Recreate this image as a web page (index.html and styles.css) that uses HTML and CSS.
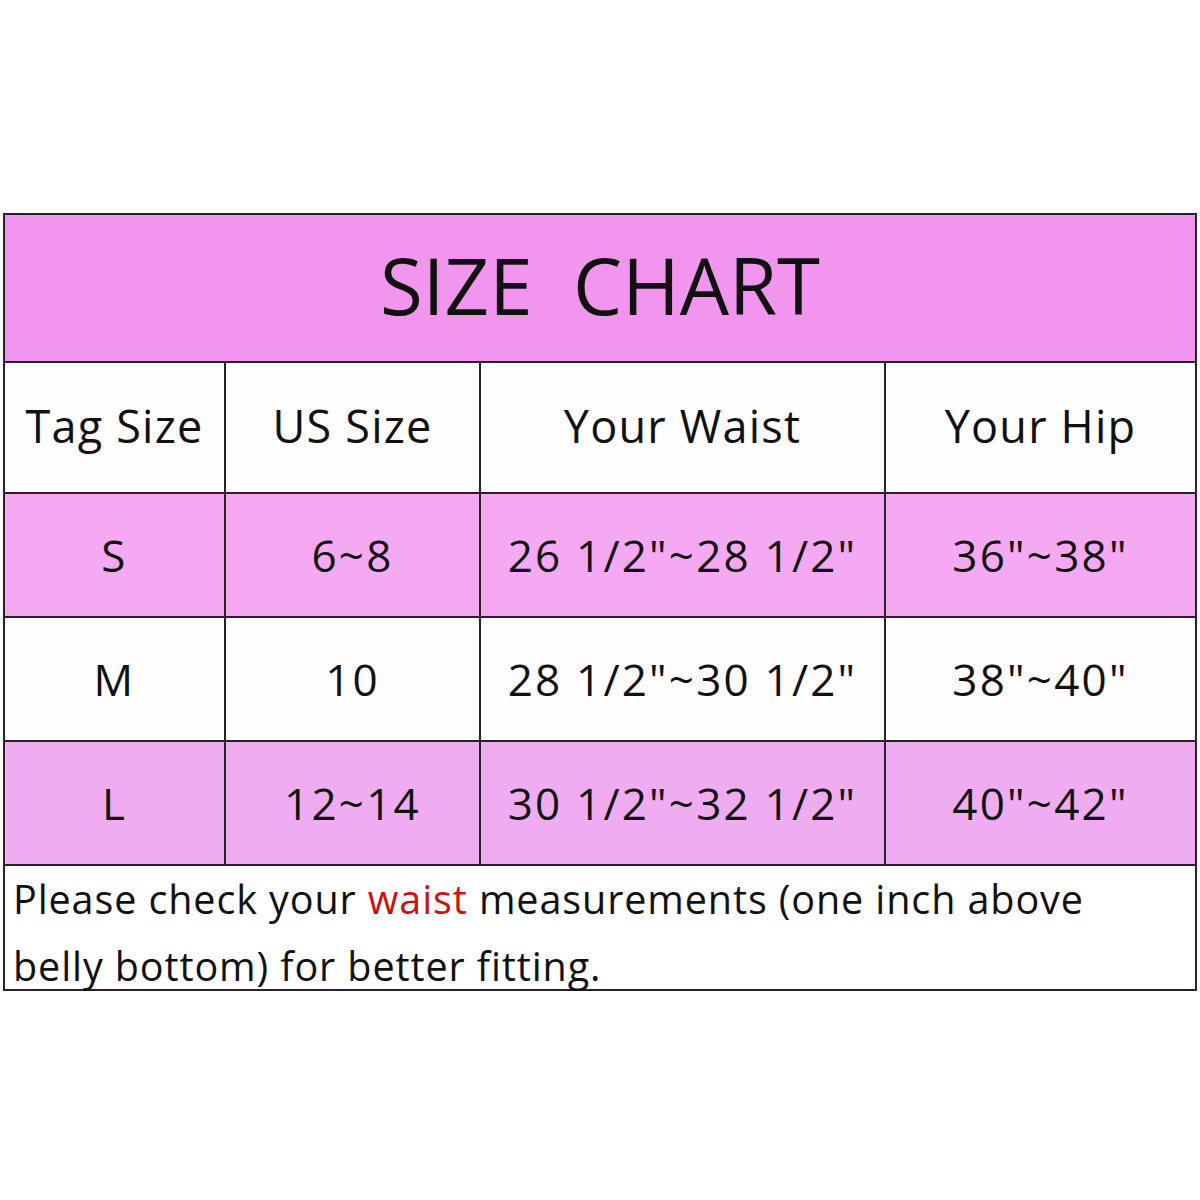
FILE: index.html
```html
<!DOCTYPE html>
<html>
<head>
<meta charset="utf-8">
<link rel="stylesheet" href="styles.css">
</head>
<body>
<div class="chart">
  <div class="title">SIZE&nbsp;&nbsp;CHART</div>
  <div class="grid">
    <div class="cell head">Tag Size</div>
    <div class="cell head">US Size</div>
    <div class="cell head">Your Waist</div>
    <div class="cell head">Your Hip</div>

    <div class="cell pink">S</div>
    <div class="cell pink">6~8</div>
    <div class="cell pink">26 1/2"~28 1/2"</div>
    <div class="cell pink">36"~38"</div>

    <div class="cell">M</div>
    <div class="cell">10</div>
    <div class="cell">28 1/2"~30 1/2"</div>
    <div class="cell">38"~40"</div>

    <div class="cell pink2">L</div>
    <div class="cell pink2">12~14</div>
    <div class="cell pink2">30 1/2"~32 1/2"</div>
    <div class="cell pink2">40"~42"</div>
  </div>
  <div class="note">Please check your <span class="red">waist</span> measurements (one inch above belly bottom) for better fitting.</div>
</div>
</body>
</html>
```
FILE: styles.css
```css
html, body {
  margin: 0;
  padding: 0;
  background: #ffffff;
}
body {
  width: 1200px;
  height: 1200px;
  font-family: "Open Sans", "Noto Sans", sans-serif;
  color: #111;
}
.chart {
  margin: 213px 0 0 3px;
  width: 1194px;
  border: 2px solid #2b1f2b;
  box-sizing: border-box;
}
.title {
  height: 148px;
  background: #f295ee;
  border-bottom: 2px solid #2b1f2b;
  box-sizing: border-box;
  display: flex;
  align-items: center;
  justify-content: center;
  font-size: 78px;
  padding-bottom: 6px;
}
.grid {
  display: grid;
  grid-template-columns: 221px 255px 405px 1fr;
  grid-template-rows: 131px 124px 124px 124px;
}
.cell {
  display: flex;
  align-items: center;
  justify-content: center;
  font-size: 44px;
  letter-spacing: 2.2px;
  border-right: 2px solid #2b1f2b;
  border-bottom: 2px solid #2b1f2b;
  box-sizing: border-box;
  background: #fffdfe;
}
.cell:nth-child(4n) {
  border-right: none;
}
.head {
  font-size: 45px;
  letter-spacing: 1.2px;
  padding-bottom: 4px;
}
.pink {
  background: #f5a9f2;
}
.pink2 {
  background: #efacf1;
}
.note {
  font-size: 39.5px;
  letter-spacing: 0.9px;
  line-height: 67px;
  padding: 0 80px 0 8px;
  height: 123px;
  box-sizing: border-box;
}
.red {
  color: #cc1111;
}
```
